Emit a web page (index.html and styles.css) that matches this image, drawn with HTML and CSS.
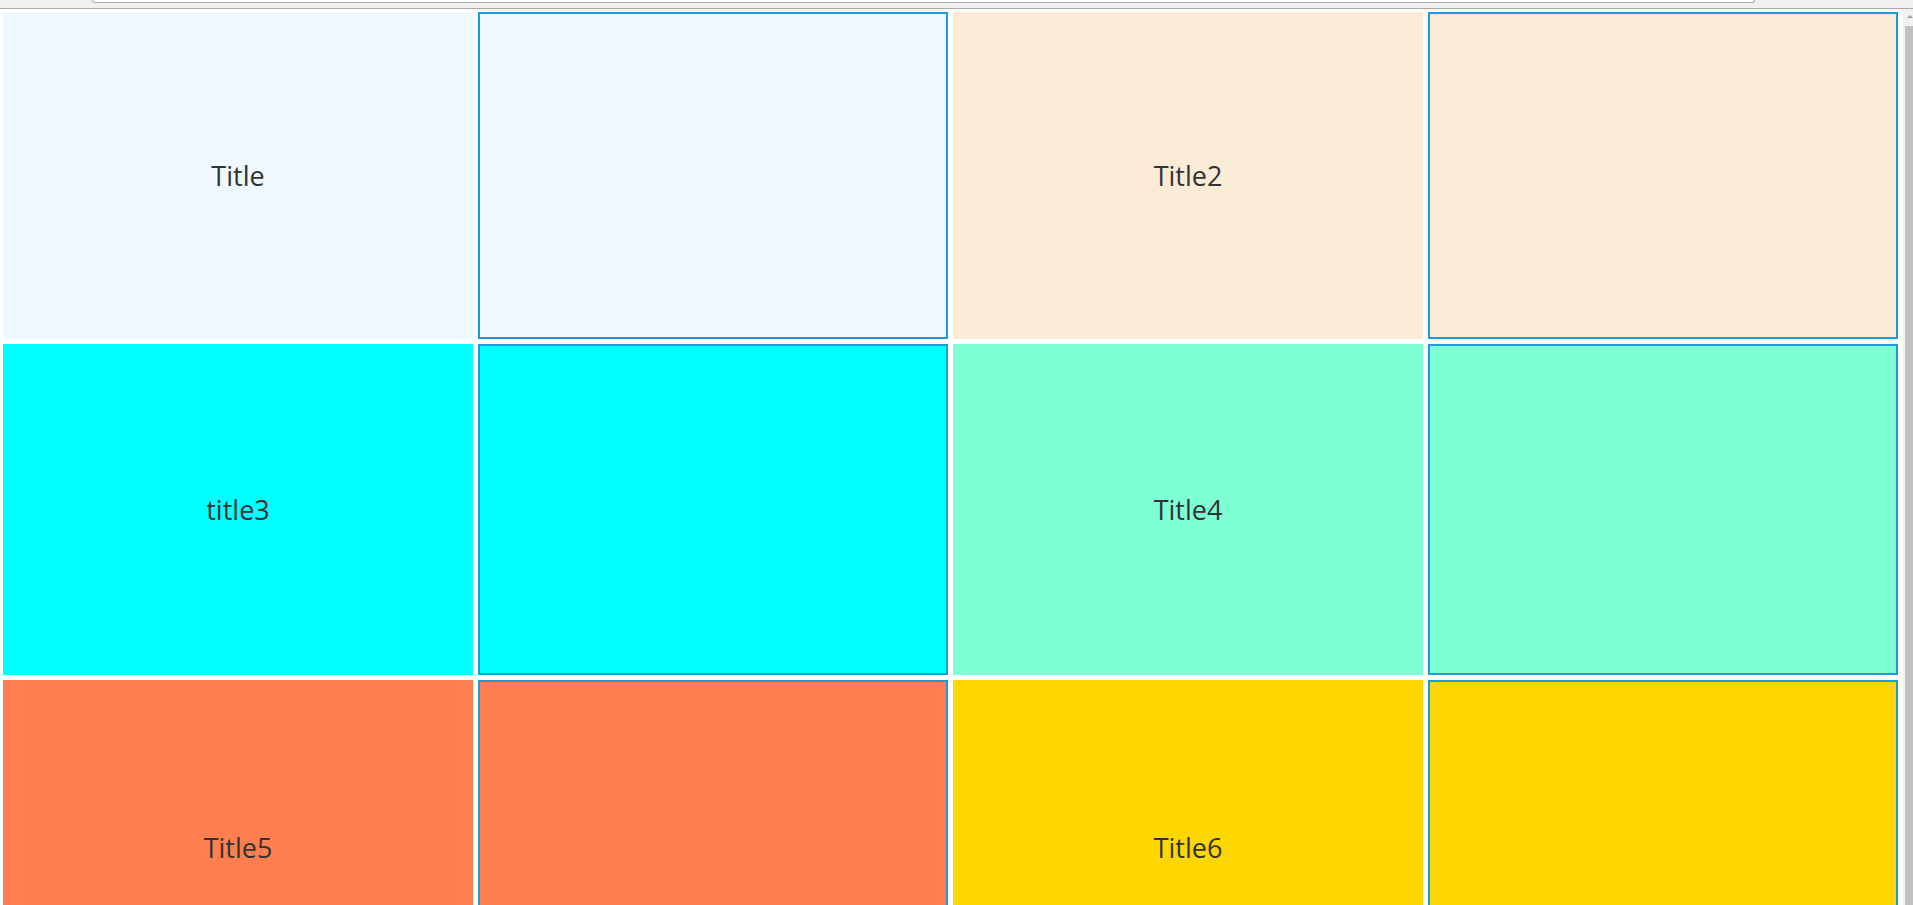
FILE: index.html
```html
<!DOCTYPE html>
<html lang="en">
<head>
  <meta charset="UTF-8" />
  <title>Tiles</title>
  <meta name="viewport" content="width=device-width, initial-scale=1.0" />
  <link rel="stylesheet" href="styles.css">
</head>
<body>
  <div class="chrome">
    <div class="address"></div>
  </div>

  <div class="window">
    <div class="page">
      <div class="tiles">
        <div class="tile aliceblue row-a"><span>Title</span></div>
        <div class="tile aliceblue framed row-a"></div>
        <div class="tile antique row-a"><span>Title2</span></div>
        <div class="tile antique framed row-a"></div>

        <div class="tile cyan row-b"><span>title3</span></div>
        <div class="tile cyan framed row-b"></div>
        <div class="tile aqua row-b"><span>Title4</span></div>
        <div class="tile aqua framed row-b"></div>

        <div class="tile coral row-c"><span>Title5</span></div>
        <div class="tile coral framed row-c"></div>
        <div class="tile gold row-c"><span>Title6</span></div>
        <div class="tile gold framed row-c"></div>
      </div>
    </div>

    <div class="scrollbar">
      <div class="arrow"></div>
      <div class="thumb"></div>
    </div>
  </div>
</body>
</html>
```

FILE: styles.css
```css
html, body {
  margin: 0;
  height: 100%;
  overflow: hidden;
}
body {
  font-family: 'Segoe UI', 'Open Sans', 'Noto Sans', sans-serif;
  background-color: #fff;
  color: #333;
}
.chrome {
  height: 8px;
  background-color: #f1f1f1;
  border-bottom: 1px solid #ababab;
}
.address {
  margin-left: 92px;
  width: 1661px;
  height: 2px;
  background-color: #fff;
  border: 1px solid #ababab;
  border-top: none;
  border-radius: 0 0 3px 3px;
}
.window {
  display: flex;
  height: calc(100% - 9px);
}
.page {
  flex: 1;
  padding: 3px 5px 0 3px;
  overflow: hidden;
}
.tiles {
  display: grid;
  grid-template-columns: repeat(4, 470px);
  gap: 5px;
}
.tile {
  box-sizing: border-box;
  display: flex;
  align-items: center;
  justify-content: center;
  font-size: 27px;
  line-height: 1;
}
.row-a { height: 327px; }
.row-b { height: 331px; }
.row-c { height: 334px; }
.framed {
  border: 2px solid #1f9ad8;
}
.aliceblue { background-color: aliceblue; }
.antique { background-color: antiquewhite; }
.cyan { background-color: cyan; }
.aqua { background-color: aquamarine; }
.coral { background-color: coral; }
.gold { background-color: gold; }

.scrollbar {
  width: 10px;
  background-color: #f1f1f1;
  position: relative;
}
.arrow {
  position: absolute;
  top: 6px;
  left: 4px;
  width: 0;
  height: 0;
  border-left: 3px solid transparent;
  border-right: 3px solid transparent;
  border-bottom: 3px solid #a3a3a3;
}
.thumb {
  position: absolute;
  top: 17px;
  left: 2px;
  right: 0;
  bottom: 0;
  background-color: #c1c1c1;
}
```
